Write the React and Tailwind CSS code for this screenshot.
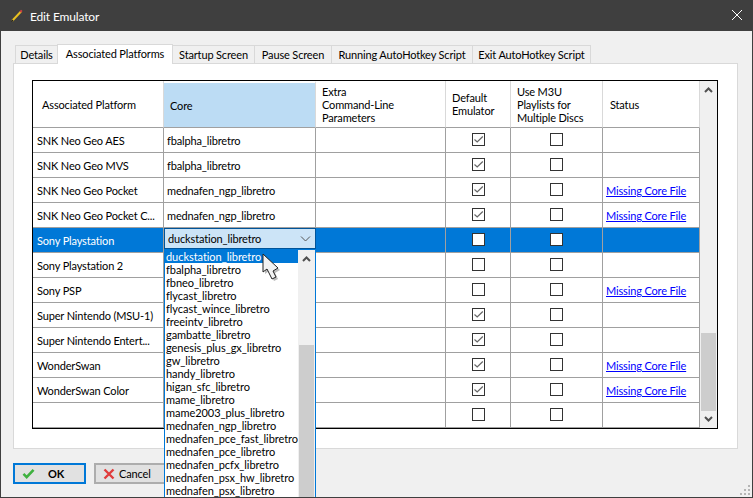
const rows = [
  { name: 'SNK Neo Geo AES', core: 'fbalpha_libretro', def: true },
  { name: 'SNK Neo Geo MVS', core: 'fbalpha_libretro', def: true },
  { name: 'SNK Neo Geo Pocket', core: 'mednafen_ngp_libretro', def: true, missing: true },
  { name: 'SNK Neo Geo Pocket C...', core: 'mednafen_ngp_libretro', def: true, missing: true },
  { name: 'Sony Playstation', core: '', selected: true },
  { name: 'Sony Playstation 2', core: '' },
  { name: 'Sony PSP', core: '', missing: true },
  { name: 'Super Nintendo (MSU-1)', core: '', def: true },
  { name: 'Super Nintendo Entert...', core: '', def: true },
  { name: 'WonderSwan', core: '', def: true, missing: true },
  { name: 'WonderSwan Color', core: '', def: true, missing: true },
  { name: '', core: '' },
]

const cores = [
  'duckstation_libretro', 'fbalpha_libretro', 'fbneo_libretro', 'flycast_libretro',
  'flycast_wince_libretro', 'freeintv_libretro', 'gambatte_libretro', 'genesis_plus_gx_libretro',
  'gw_libretro', 'handy_libretro', 'higan_sfc_libretro', 'mame_libretro', 'mame2003_plus_libretro',
  'mednafen_ngp_libretro', 'mednafen_pce_fast_libretro', 'mednafen_pce_libretro',
  'mednafen_pcfx_libretro', 'mednafen_psx_hw_libretro', 'mednafen_psx_libretro',
]

const tabs = [
  ['Details', 'w-[43px]'],
  ['Startup Screen', 'w-[83px]'],
  ['Pause Screen', 'w-[78px]'],
  ['Running AutoHotkey Script', 'w-[142px]'],
  ['Exit AutoHotkey Script', 'w-[119px]'],
]

const cols = 'grid grid-cols-[131px_152px_130px_65px_92px_97px]'
const head = 'h-[47px] border-r border-b border-r-[#d9d9d9] border-b-[#a0a0a0] flex items-center'

function Tab({ label, width }) {
  return (
    <div className={`${width} h-[18px] flex items-center justify-center whitespace-nowrap bg-[#f0f0f0] border border-b-0 border-[#d9d9d9] -ml-px first:ml-0`}>
      {label}
    </div>
  )
}

function Box({ checked }) {
  return (
    <div className="w-[13px] h-[13px] -mt-px border border-[#333] bg-white flex items-center justify-center">
      {checked && (
        <svg width="11" height="11" viewBox="0 0 11 11">
          <path d="M1.5 5.5 L4.2 8 L9.8 2.5" fill="none" stroke="#666" strokeWidth="1.2" />
        </svg>
      )}
    </div>
  )
}

function Row({ row }) {
  const line = row.selected ? 'border-[#a0a0a0] bg-[#0078d7] text-white' : 'border-[#a0a0a0]'
  const cell = `h-[25px] border-r border-b ${line} flex items-center`
  return (
    <div className={cols}>
      <div className={`${cell} pl-[4px] whitespace-nowrap overflow-hidden`}>{row.name}</div>
      <div className={`${cell} pl-[3px]`}>{row.core}</div>
      <div className={cell} />
      <div className={`${cell} justify-center`}><Box checked={row.def} /></div>
      <div className={`${cell} justify-center`}><Box /></div>
      <div className={`${cell} pl-[3px]`}>
        {row.missing && <span className="text-[#0000ff] underline">Missing Core File</span>}
      </div>
    </div>
  )
}

function Arrow({ down }) {
  return (
    <svg width="9" height="6" viewBox="0 0 9 6" className={down ? 'rotate-180' : ''}>
      <path d="M1 5 L4.5 1.5 L8 5" fill="none" stroke="#505050" strokeWidth="2" />
    </svg>
  )
}

export default function App() {
  return (
    <div className="relative w-[753px] h-[498px] overflow-hidden border border-[#3f3f3f] bg-[#f0f0f0] text-[11px] tracking-[-0.15px] leading-[13px] text-black font-['Lato','Liberation_Sans',sans-serif]">
      <div className="h-[30px] bg-[#3f3f3f] text-white flex items-center pl-[10px] pr-[10px] text-[12px]">
        <svg width="12" height="13" viewBox="0 0 12 13" className="-mt-[2px]">
          <path d="M1 12 L10 2.5" stroke="#e8c020" strokeWidth="2" />
          <path d="M9.2 3.2 L10.8 1.4" stroke="#d04040" strokeWidth="2" />
          <path d="M0.5 12.5 L2 11" stroke="#222" strokeWidth="1.5" />
        </svg>
        <span className="ml-[7px]">Edit Emulator</span>
        <svg width="10" height="10" viewBox="0 0 10 10" className="ml-auto -mt-[2px]">
          <path d="M0 0 L10 10 M10 0 L0 10" stroke="#fff" strokeWidth="1" />
        </svg>
      </div>

      <div className="pl-[12px] pt-[12px]">
        <div className="flex items-end h-[20px] pl-[2px]">
          <Tab label={tabs[0][0]} width={tabs[0][1]} />
          <div className="w-[116px] h-[20px] flex items-center justify-center whitespace-nowrap bg-white border border-b-0 border-[#d9d9d9] -ml-px z-10 pb-[2px] relative top-px">
            Associated Platforms
          </div>
          {tabs.slice(1).map(t => <Tab key={t[0]} label={t[0]} width={t[1]} />)}
        </div>

        <div className="w-[725px] h-[386px] bg-white border border-[#d9d9d9] pl-[18px] pt-[16px]">
          <div className="w-[686px] h-[349px] border border-black flex">
            <div className="w-[667px]">
              <div className={cols}>
                <div className={`${head} pl-[9px]`}>Associated Platform</div>
                <div className={`${head} pl-[6px] bg-[#bcdcf4] border-t-2 border-t-white`}>Core</div>
                <div className={`${head} pl-[6px]`}><div>Extra<br />Command-Line<br />Parameters</div></div>
                <div className={`${head} pl-[6px]`}><div>Default<br />Emulator</div></div>
                <div className={`${head} pl-[6px]`}><div>Use M3U<br />Playlists for<br />Multiple Discs</div></div>
                <div className={`${head} pl-[7px]`}>Status</div>
              </div>
              {rows.map((r, i) => <Row key={i} row={r} />)}
            </div>
            <div className="w-[17px] bg-[#f0f0f0] flex flex-col items-center">
              <div className="h-[18px] flex items-center"><Arrow /></div>
              <div className="w-[15px] h-[78px] bg-[#cdcdcd] mt-[234px]" />
              <div className="h-[16px] flex items-center"><Arrow down /></div>
            </div>
          </div>
        </div>

        <div className="flex gap-[8px] mt-[14px]">
          <button className="w-[73px] h-[21px] border-2 border-[#0078d7] bg-[#e1e1e1] flex items-center pl-[7px]">
            <svg width="13" height="11" viewBox="0 0 14 12">
              <path d="M1.5 6.5 L5 10 L12.5 2" fill="none" stroke="#3fb13f" strokeWidth="2.8" />
            </svg>
            <span className="ml-[13px] font-bold">OK</span>
          </button>
          <button className="w-[75px] h-[21px] border-2 border-[#adadad] bg-[#e1e1e1] flex items-center pl-[7px]">
            <svg width="12" height="12" viewBox="0 0 12 12">
              <path d="M1.5 1.5 L10.5 10.5 M10.5 1.5 L1.5 10.5" stroke="#e03c3c" strokeWidth="2.4" />
            </svg>
            <span className="ml-[4px]">Cancel</span>
          </button>
        </div>
      </div>

      <div className="absolute left-[163px] top-[227px] w-[152px] h-[21px] bg-[#cce4f7] border border-[#005499] flex items-center pl-[3px]">
        duckstation_libretro
        <svg width="11" height="6" viewBox="0 0 11 6" className="absolute right-[4px] top-[7px]">
          <path d="M1 0.5 L5.5 5 L10 0.5" fill="none" stroke="#555" strokeWidth="1" />
        </svg>
      </div>

      <div className="absolute left-[163px] top-[248px] w-[152px] h-[250px] bg-white border-x border-t border-[#0078d7] flex">
        <div className="w-[133px] overflow-hidden whitespace-nowrap tracking-[-0.05px]">
          {cores.map((c, i) => (
            <div key={c} className={`h-[13px] pl-[1px] ${i === 0 ? 'bg-[#0078d7] text-white' : ''}`}>{c}</div>
          ))}
        </div>
        <div className="w-[17px] bg-[#f0f0f0] flex flex-col items-center">
          <div className="h-[17px] flex items-center"><Arrow /></div>
          <div className="w-[15px] flex-1 bg-[#cdcdcd] mt-[78px]" />
        </div>
      </div>

      <svg width="22" height="32" viewBox="0 0 22 32" className="absolute left-[260px] top-[251px]">
        <path d="M4 4 L4 22 L8 19 L13 29 L17 27 L14 21 L19 18 Z" fill="#666" opacity="0.45" />
        <path d="M2 2 L2 20 L6 17 L11 27 L15 25 L12 19 L17 16 Z" fill="#f2f2f2" stroke="#222" strokeWidth="1" />
      </svg>

      <svg width="11" height="11" viewBox="0 0 11 11" className="absolute right-px bottom-px" fill="#b5b5b5">
        <rect x="8" y="0" width="2" height="2" />
        <rect x="4" y="4" width="2" height="2" />
        <rect x="8" y="4" width="2" height="2" />
        <rect x="0" y="8" width="2" height="2" />
        <rect x="4" y="8" width="2" height="2" />
        <rect x="8" y="8" width="2" height="2" />
      </svg>
    </div>
  )
}
